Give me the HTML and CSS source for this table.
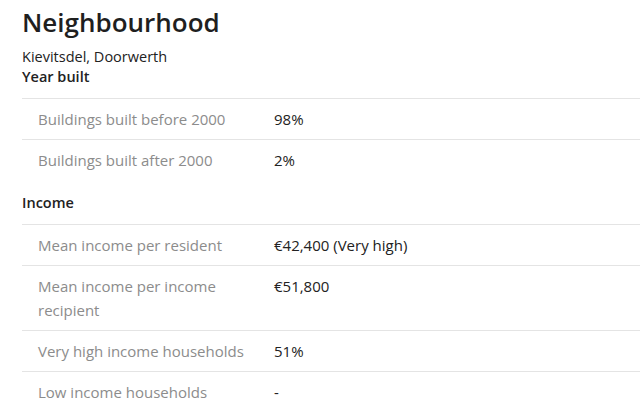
FILE: index.html
```html
<!DOCTYPE html>
<html>
<head>
<meta charset="utf-8">
<link rel="stylesheet" href="styles.css">
</head>
<body>
<main class="page">
  <h1 class="title">Neighbourhood</h1>
  <p class="subtitle">Kievitsdel, Doorwerth</p>

  <h2 class="section">Year built</h2>
  <div class="table">
    <div class="row"><div class="label">Buildings built before 2000</div><div class="value">98%</div></div>
    <div class="row"><div class="label">Buildings built after 2000</div><div class="value">2%</div></div>
  </div>

  <h2 class="section section-gap">Income</h2>
  <div class="table">
    <div class="row"><div class="label">Mean income per resident</div><div class="value">€42,400 (Very high)</div></div>
    <div class="row"><div class="label">Mean income per income recipient</div><div class="value">€51,800</div></div>
    <div class="row"><div class="label">Very high income households</div><div class="value">51%</div></div>
    <div class="row"><div class="label">Low income households</div><div class="value">-</div></div>
  </div>
</main>
</body>
</html>
```

FILE: styles.css
```css
html, body {
  margin: 0;
  padding: 0;
  background: #ffffff;
}
body {
  font-family: "Open Sans", "Noto Sans", sans-serif;
  color: #222222;
}
.page {
  padding: 6px 0 0 22px;
}
.title {
  margin: 0;
  font-size: 26px;
  line-height: 32px;
  font-weight: 600;
  color: #1f1f1f;
}
.subtitle {
  margin: 9px 0 0;
  font-size: 14.5px;
  line-height: 20px;
}
.section {
  margin: 0 0 11px;
  font-size: 14.5px;
  line-height: 20px;
  font-weight: 600;
}
.section-gap {
  margin-top: 13px;
}
.row {
  display: grid;
  grid-template-columns: 236px 1fr;
  padding: 8px 0 8px 16px;
  border-top: 1px solid #e4e4e4;
  font-size: 15px;
  line-height: 24px;
}
.label {
  color: #8c8c8c;
  padding-right: 12px;
}
.value {
  color: #222222;
}
```
